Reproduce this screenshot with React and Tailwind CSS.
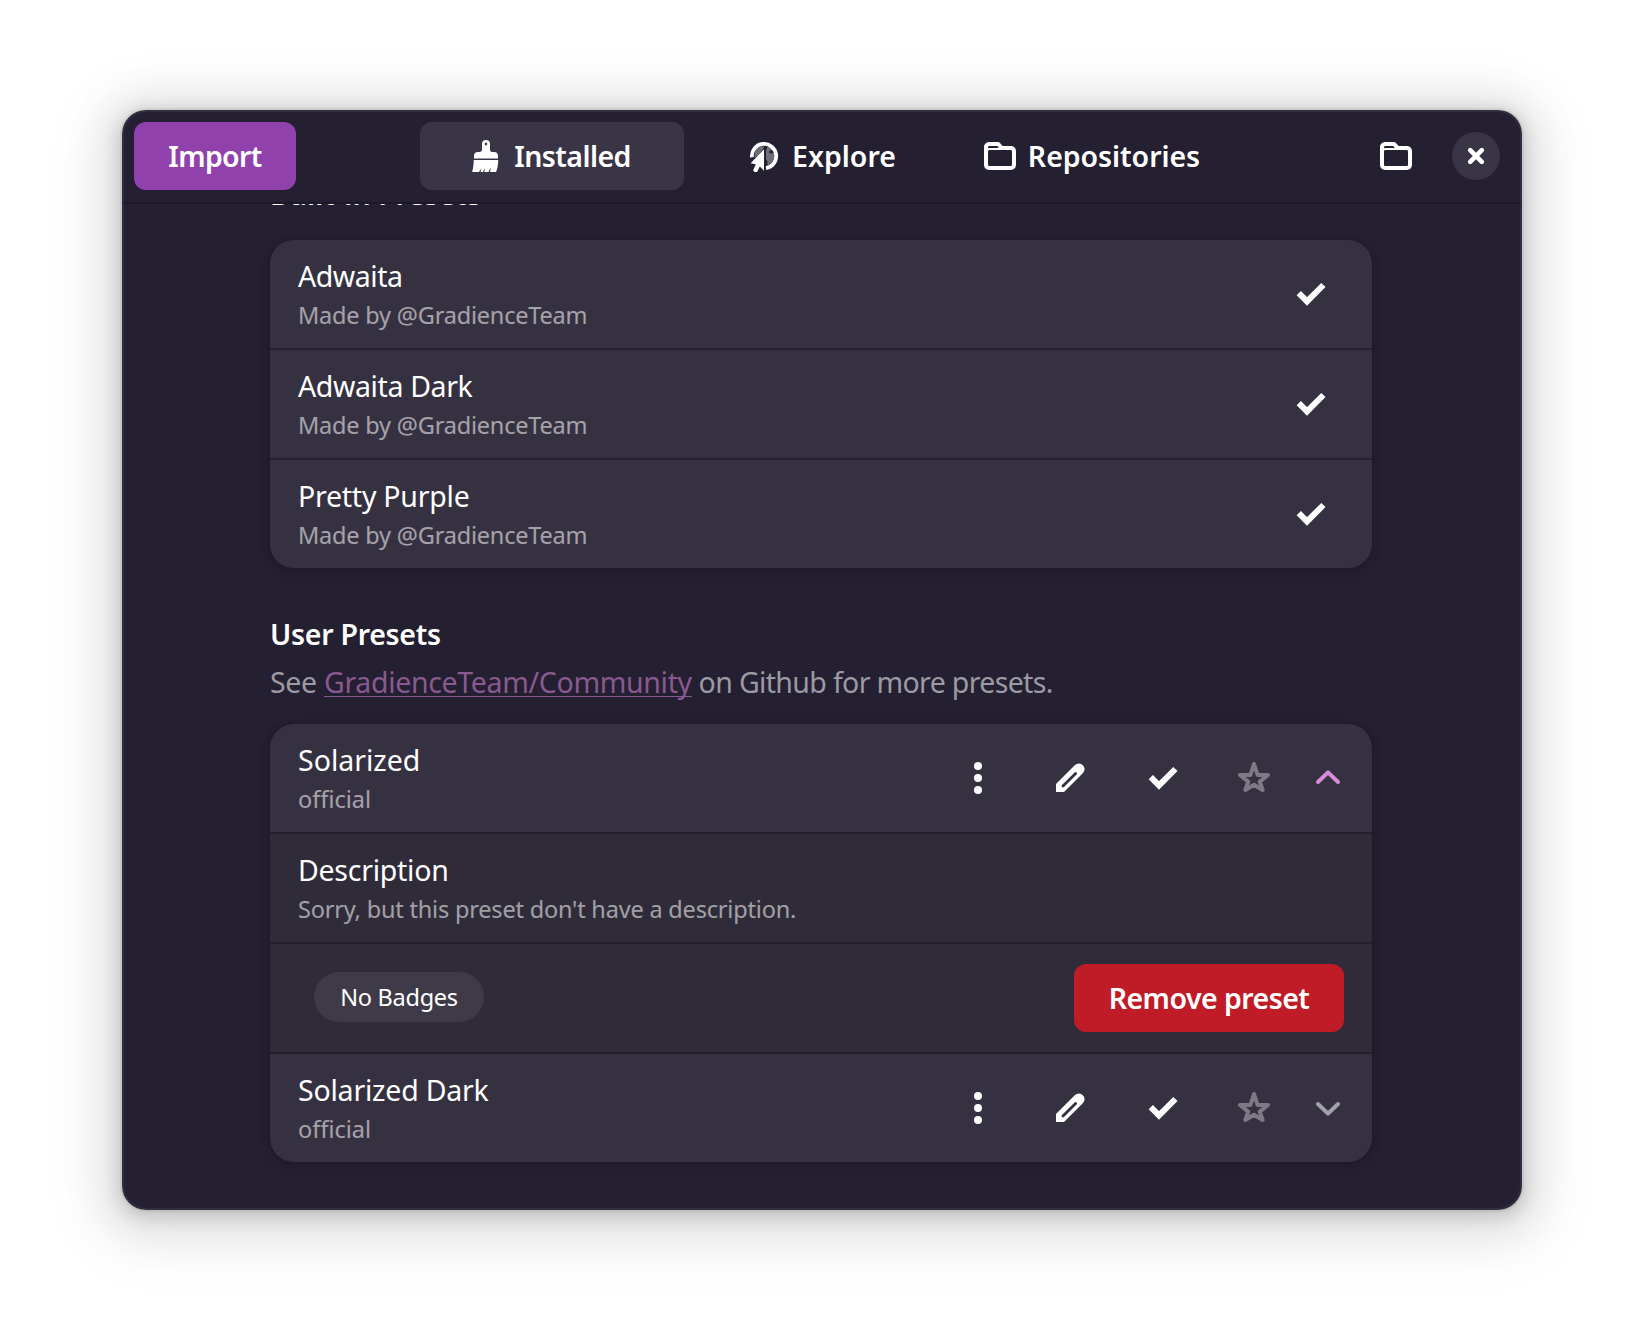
function Icon({ children, className = "" }) {
  return (
    <svg viewBox="0 0 16 16" className={`size-8 shrink-0 ${className}`} fill="currentColor" aria-hidden="true">
      {children}
    </svg>
  );
}

function FolderIcon() {
  return (
    <Icon>
      <path
        fillRule="evenodd"
        d="M2.6 1C1.2 1 0 2.1 0 3.6v8.8C0 13.9 1.1 15 2.6 15h10.8c1.5 0 2.6-1.1 2.6-2.6V5.6C16 4.1 14.9 3 13.4 3H9.3L8.2 1.7C7.9 1.3 7.4 1 6.8 1zM2.7 3h3.7c.4 0 .7.4.9 1H2.6c-.2 0-.4 0-.6.1v-.4c0-.4.3-.7.7-.7zM2.8 5h10.4c.5 0 .8.3.8.8v6.4c0 .5-.3.8-.8.8H2.8c-.5 0-.8-.3-.8-.8V5.8c0-.5.3-.8.8-.8z"
      />
    </Icon>
  );
}

function BrushIcon() {
  return (
    <Icon>
      <path
        fillRule="evenodd"
        d="M6 2a2 2 0 0 1 4 0v2.8c0 .8.4 1.2 1.2 1.2h.8a2 2 0 0 1 2 2v1.2H2V8a2 2 0 0 1 2-2h.8C5.6 6 6 5.6 6 4.8zM8 1.4a.65.65 0 1 0 0 1.3.65.65 0 0 0 0-1.3z"
      />
      <path d="M1.9 10h12.2c0 2.3-.3 4.4-1.100 6h-3l.5-2.200L9.200 16H7.100l.5-2L6.400 16H5.300l.5-1.900L4.500 16H1.100c.5-1.900.7-3.900.8-6z" />
    </Icon>
  );
}

function GlobeIcon() {
  return (
    <Icon>
      <path d="M1.95 8.6A6.1 6.1 0 1 1 9 14.05" fill="none" stroke="currentColor" strokeWidth="1.9" />
      <path
        opacity="0.35"
        d="M3.3 6.3 4.6 4.3 6.400 3.400 8.200 3.100 7.500 4.500 5.400 7.200 3.400 9zM9 5l.8-1.600 1.900.6 1.200 1.300H11l-.6.8.9.6 1.900-.3.200 2-1.300 2.600L9.800 13 9.700 10.600 9 9.800z"
      />
      <path d="M8 4.600v10.800L5.900 13.200l-1 2.200a1.100 1.100 0 0 1-2.100-.8L3.900 12.100 1.300 11.600z" />
    </Icon>
  );
}

function CheckIcon() {
  return (
    <Icon>
      <path d="M2.400 7.600 6.500 11.700 14.700 3.500" fill="none" stroke="currentColor" strokeWidth="3" />
    </Icon>
  );
}

function DotsIcon() {
  return (
    <Icon>
      <circle cx="8" cy="2" r="2" />
      <circle cx="8" cy="8" r="2" />
      <circle cx="8" cy="14" r="2" />
    </Icon>
  );
}

function PencilIcon() {
  return (
    <Icon>
      <path
        fillRule="evenodd"
        d="M1 15V11L10.500 1.500A2.830 2.830 0 0 1 14.500 5.500L5 15ZM4 11.500a.7.7 0 0 0 1 1L11.300 6.200a.7.7 0 0 0-1-1z"
      />
    </Icon>
  );
}

function StarIcon() {
  return (
    <Icon className="text-[#7e7984]">
      <path
        d="M8 1 9.800 6.500 15 6.500 10.900 9.800 12.300 14 8 11.400 3.700 14 5.100 9.800 1 6.500 6.200 6.500Z"
        fill="none"
        stroke="currentColor"
        strokeWidth="2"
        strokeLinejoin="round"
      />
    </Icon>
  );
}

function Chevron({ open }) {
  return (
    <Icon className={open ? "text-[#dc8add]" : "text-[#a4a2a9]"}>
      <path
        d={open ? "M3 10 8 5.200 13 10" : "M3 6 8 10.800 13 6"}
        fill="none"
        stroke="currentColor"
        strokeWidth="2"
        strokeLinecap="round"
        strokeLinejoin="round"
      />
    </Icon>
  );
}

function CloseIcon() {
  return (
    <Icon>
      <path
        d="M5.100 5.100 10.900 10.900M10.900 5.100 5.100 10.900"
        fill="none"
        stroke="currentColor"
        strokeWidth="2.300"
        strokeLinecap="round"
      />
    </Icon>
  );
}

function Tab({ icon, label, active, tracking }) {
  return (
    <button
      className={`flex h-[68px] w-[264px] items-center justify-center gap-3 rounded-xl font-semibold ${active ? "bg-[#3a3546]" : ""}`}
    >
      {icon}
      <span className={`leading-10 ${tracking}`}>{label}</span>
    </button>
  );
}

function RowText({ title, subtitle, titleTracking, subTracking }) {
  return (
    <div className="flex grow flex-col gap-[3px] self-start pt-4 whitespace-nowrap">
      <div className={`leading-10 ${titleTracking}`}>{title}</div>
      <div className={`text-[23.5px] leading-8 text-white/55 ${subTracking}`}>{subtitle}</div>
    </div>
  );
}

function PresetRow({ open, ...text }) {
  return (
    <div className="flex h-[108px] items-center bg-[#363141] pr-7 pl-7">
      <RowText {...text} />
      <div className="flex gap-[60px]">
        <DotsIcon />
        <PencilIcon />
        <CheckIcon />
        <StarIcon />
      </div>
      <div className="ml-[42px]">
        <Chevron open={open} />
      </div>
    </div>
  );
}

const cardClass =
  "flex flex-col gap-0.5 overflow-hidden rounded-3xl shadow-[0_0_0_2px_rgba(0,0,6,0.03),0_2px_6px_2px_rgba(0,0,6,0.07),0_4px_12px_4px_rgba(0,0,6,0.03)]";

const builtIn = [
  { title: "Adwaita", titleTracking: "tracking-[-0.45px]" },
  { title: "Adwaita Dark", titleTracking: "tracking-[-0.38px]" },
  { title: "Pretty Purple", titleTracking: "tracking-[-0.24px]" },
];

export default function App() {
  return (
    <div className="h-[1344px] w-[1644px] overflow-hidden bg-white pt-[110px] pl-[122px] font-['Noto_Sans',sans-serif] text-[28.5px] text-white">
      <div className="relative h-[1100px] w-[1400px] rounded-3xl shadow-[0_0_0_2px_rgba(0,0,0,0.05),0_4px_16px_4px_rgba(0,0,0,0.13),0_6px_40px_20px_rgba(0,0,0,0.09),0_12px_64px_32px_rgba(0,0,0,0.04)]">
        <div className="flex h-full flex-col overflow-hidden rounded-3xl bg-[#241f31]">
          <header className="flex h-[94px] shrink-0 items-center border-b-2 border-[#1c1826] pr-[22px] pl-3">
            <button className="h-[68px] w-[162px] rounded-xl bg-[#9141ac] leading-10 font-semibold tracking-[-0.65px]">
              Import
            </button>
            <nav className="ml-[124px] flex gap-1.5">
              <Tab icon={<BrushIcon />} label="Installed" active tracking="pr-[3px] tracking-[-0.57px]" />
              <Tab icon={<GlobeIcon />} label="Explore" tracking="tracking-normal" />
              <Tab icon={<FolderIcon />} label="Repositories" tracking="tracking-[-0.05px]" />
            </nav>
            <div className="ml-auto flex items-center gap-10">
              <FolderIcon />
              <button className="flex size-12 items-center justify-center rounded-full bg-[#3a3546]">
                <CloseIcon />
              </button>
            </div>
          </header>

          <main className="min-h-0 grow overflow-hidden pr-[150px] pl-[148px]">
            <h2 className="-mt-[30px] leading-10 font-semibold tracking-[0.08px]">Built-in Presets</h2>
            <section className={`mt-[26px] bg-[#27222f] ${cardClass}`}>
              {builtIn.map((preset) => (
                <div key={preset.title} className="flex h-[108px] items-center bg-[#363141] pr-[46px] pl-7">
                  <RowText {...preset} subtitle="Made by @GradienceTeam" subTracking="tracking-[-0.2px]" />
                  <CheckIcon />
                </div>
              ))}
            </section>

            <h2 className="mt-[46px] leading-10 font-semibold tracking-[-0.28px]">User Presets</h2>
            <p className="mt-2 leading-10 tracking-[-0.65px] whitespace-pre text-[#9c9aa2]">
              <span className="tracking-[-0.3px]">{"See "}</span>
              <a className="tracking-[-0.33px] text-[#895a90] underline decoration-1 underline-offset-[3px] [text-decoration-skip-ink:none]">
                GradienceTeam/Community
              </a>
              {" on Github for more presets."}
            </p>

            <section className={`mt-[22px] bg-[#231f2b] ${cardClass}`}>
              <PresetRow
                open
                title="Solarized"
                subtitle="official"
                titleTracking="tracking-normal"
                subTracking="tracking-normal"
              />
              <div className="flex h-[108px] bg-[#2f2b38] px-7">
                <RowText
                  title="Description"
                  subtitle="Sorry, but this preset don't have a description."
                  titleTracking="tracking-[-0.26px]"
                  subTracking="tracking-[-0.19px]"
                />
              </div>
              <div className="flex h-[108px] items-center justify-between bg-[#2f2b38] pr-7 pl-11">
                <span className="-mt-0.5 flex h-[50px] w-[170px] items-center justify-center rounded-full bg-[#3f3a48] text-[23.5px] leading-8 tracking-[-0.28px]">
                  No Badges
                </span>
                <button className="h-[68px] w-[270px] rounded-xl bg-[#c01c28] leading-10 font-semibold tracking-[-0.54px]">
                  Remove preset
                </button>
              </div>
              <PresetRow
                title="Solarized Dark"
                subtitle="official"
                titleTracking="tracking-[-0.21px]"
                subTracking="tracking-normal"
              />
            </section>
          </main>
        </div>
        <div className="pointer-events-none absolute inset-0 rounded-3xl shadow-[inset_0_0_0_2px_rgba(255,255,255,0.07)]" />
      </div>
    </div>
  );
}
